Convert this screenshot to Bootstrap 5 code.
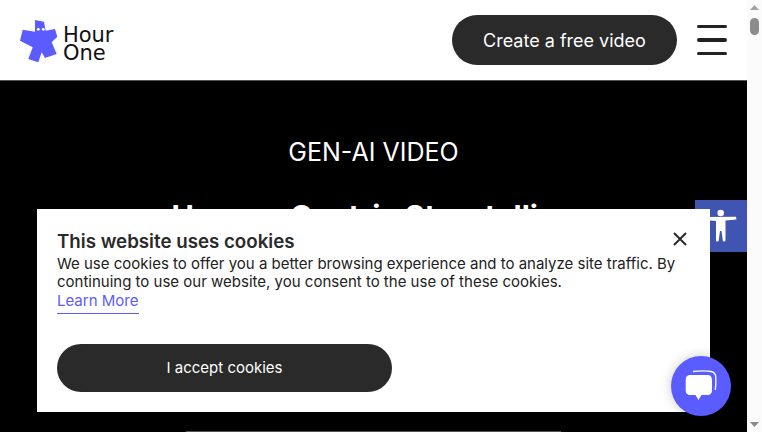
<!DOCTYPE html>
<html lang="en"><head><meta charset="utf-8">
<link href="https://cdn.jsdelivr.net/npm/bootstrap@5.3.0/dist/css/bootstrap.min.css" rel="stylesheet">
<style>
html,body{height:432px;overflow:hidden;background:#fff}
body{font-family:Inter,"Liberation Sans",sans-serif;color:#2a2a2a}
.shell{height:432px}
.pagecol{width:747px;height:432px;overflow:hidden;position:relative}
.topbar{height:81px;padding:0 20px 0 20px;background:#fff;border-bottom:1px solid #555}
.brandlogo{margin-top:2px}
.brandname{font-family:"DejaVu Sans",sans-serif;font-size:21px;line-height:18px;color:#111;letter-spacing:-.1px;font-weight:400;margin-left:5px;margin-top:8px}
.cta{width:225px;height:50px;background:#2a2a2a;color:#fff;border-radius:25px;font-size:18px;border:0;padding:0}
.cta:hover{background:#2a2a2a;color:#fff}
.burger{width:30px;gap:10px;margin-left:20px}
.burger span{height:3.4px;background:#222;border-radius:2px;display:block}
.hero{background:#000;height:351px;color:#fff;padding-top:53px}
.eyebrow{font-size:25px;line-height:36px;margin:0 0 24px}
.headline{font-size:30px;line-height:44px;font-weight:700;margin:0;white-space:nowrap}
.rule{position:absolute;left:186px;top:431px;width:375px;height:1px;background:#555}
.cookiebox{position:absolute;left:37px;top:209px;width:673px;height:203px;background:#fff;padding:22px 20px 0;}
.cookietitle{font-size:18.72px;line-height:21px;font-weight:600;color:#2a2a2a;margin:0}
.cookietext{font-size:15px;line-height:18px;color:#222;margin:3px 0 0}
.learn{display:inline-block;font-size:15px;line-height:18px;color:#5a5cff;text-decoration:none;border-bottom:1px solid #5a5cff;padding-bottom:3px;margin-top:1px;width:82px}
.accept{display:block;width:335px;height:48px;background:#2a2a2a;color:#fff;border:0;border-radius:24px;font-size:15px;margin-top:30px;padding:0}
.accept:hover{background:#2a2a2a;color:#fff}
.closer{position:absolute;right:22px;top:22px;width:16px;height:16px;display:block}
.a11y{position:absolute;left:695px;top:200px;width:52px;height:52px;background:#4054b2}
.chatfab{position:absolute;left:671px;top:356px;width:60px;height:60px;border-radius:50%;background:#5a5cff;box-shadow:0 0 12px rgba(0,0,0,.2)}
.fakebar{width:15px;height:432px;background:#fbfbfb}
.arrow{width:15px;height:15px}
.thumb{width:9px;height:17px;background:#8c8c8c;border-radius:5px;margin:3px auto 0}
</style></head>
<body>
<div class="shell d-flex">
<div class="pagecol">
  <nav class="topbar d-flex align-items-center justify-content-between">
    <a href="#" class="d-flex align-items-center text-decoration-none">
      <svg class="brandlogo d-block" width="38" height="43" viewBox="20 21 38 43" aria-hidden="true">
        <path fill="#5a5cff" d="M35 21L44 22.700L45.700 31.700L55 30L57.300 37.700L51.700 43.300L56.700 55L45 59L41.700 53.300L38.300 63.300L28.300 60L32.700 48.300L20 41.700L22.700 30.700L35 32.700Z"/>
        <circle cx="38.300" cy="30.300" r="1.400" fill="#fff"/><circle cx="43.300" cy="30.300" r="1.400" fill="#fff"/>
      </svg>
      <span class="brandname">Hour<br>One</span>
    </a>
    <div class="d-flex align-items-center">
      <button type="button" class="btn cta">Create a free video</button>
      <div class="burger d-flex flex-column"><span></span><span></span><span></span></div>
    </div>
  </nav>
  <section class="hero text-center">
    <p class="eyebrow">GEN-AI VIDEO</p>
    <h1 class="headline">Human-Centric Storytelling</h1>
  </section>
  <div class="rule"></div>
  <div class="a11y">
    <svg class="d-block" width="52" height="52" viewBox="0 0 52 52" aria-hidden="true" fill="#fff">
      <circle cx="25.700" cy="13" r="3.300"/>
      <path d="M10 17L41 16.800L41.500 19.500L30.500 20.500V40.500C30.500 41.800 28 41.800 27.800 40.500L26.500 31H25L23.700 40.500C23.500 41.800 21 41.800 21 40.500V21L10 20Z"/>
    </svg>
  </div>
  <div class="cookiebox">
    <svg class="closer" viewBox="0 0 16 16" aria-label="Close"><path d="M2 2L14 14M14 2L2 14" stroke="#2a2a2a" stroke-width="2"/></svg>
    <h2 class="cookietitle">This website uses cookies</h2>
    <p class="cookietext">We use cookies to offer you a better browsing experience and to analyze site traffic. By continuing to use our website, you consent to the use of these cookies.<br><a class="learn" href="#">Learn More</a></p>
    <button type="button" class="btn accept">I accept cookies</button>
  </div>
  <div class="chatfab">
    <svg class="d-block" width="60" height="60" viewBox="0 0 60 60" aria-hidden="true">
      <path d="M22 15.500C28 14.800 36 14.800 40 15.500C43.500 16.200 44.600 18 44.800 21C45 25 44.800 30 44.300 34" fill="none" stroke="#fff" stroke-width="1.300"/>
      <path d="M19.500 19H36C39.500 19 41 20.800 41 24V34C41 37.500 39.500 39 36 39H30.500L27.500 44L24.500 39H19.500C16.200 39 14.700 37.500 14.700 34V24C14.700 20.800 16.200 19 19.500 19Z" fill="#fff"/>
    </svg>
  </div>
</div>
<div class="fakebar d-flex flex-column justify-content-between">
  <div>
    <svg class="arrow d-block" viewBox="0 0 15 15"><path d="M3 10L7.500 5L12 10Z" fill="#a3a3a3"/></svg>
    <div class="thumb"></div>
  </div>
  <svg class="arrow d-block" viewBox="0 0 15 15"><path d="M3 5L7.500 10L12 5Z" fill="#8a8a8a"/></svg>
</div>
</div>
<script src="https://cdn.jsdelivr.net/npm/bootstrap@5.3.0/dist/js/bootstrap.bundle.min.js"></script>
</body></html>
